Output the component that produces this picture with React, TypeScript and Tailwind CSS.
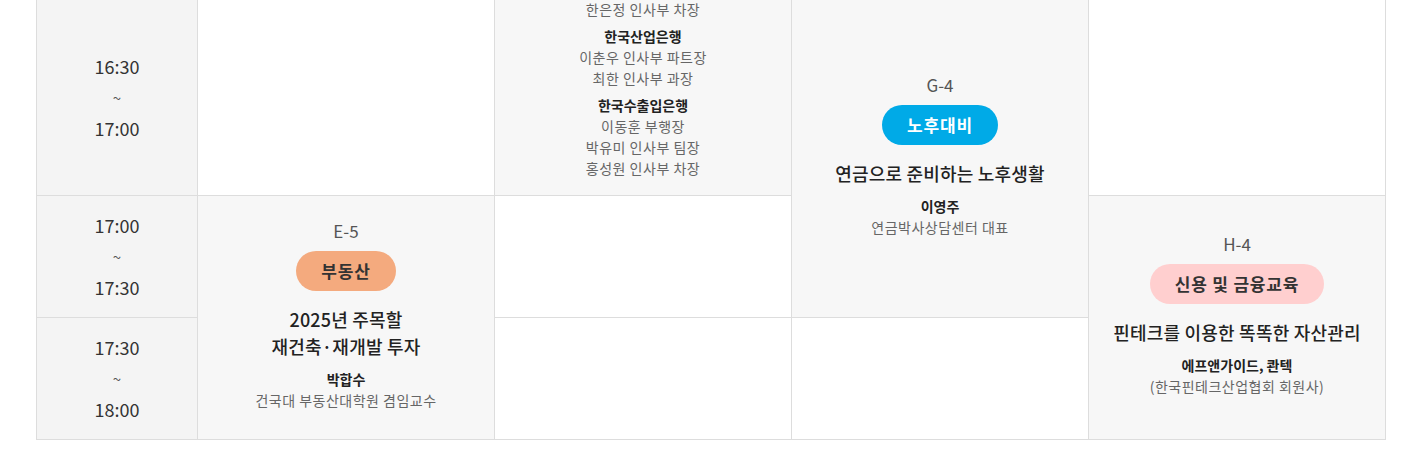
const font = { fontFamily: '"Noto Sans CJK KR", "Noto Sans", sans-serif' };

type Group = { org?: string; people: string[] };

const panel: Group[] = [
  { people: ["한은정 인사부 차장"] },
  { org: "한국산업은행", people: ["이춘우 인사부 파트장", "최한 인사부 과장"] },
  { org: "한국수출입은행", people: ["이동훈 부행장", "박유미 인사부 팀장", "홍성원 인사부 차장"] },
];

function TimeCell({ from, to, className }: { from: string; to: string; className: string }) {
  return (
    <div className={`bg-[#f4f4f4] flex flex-col items-center justify-center text-[18px] text-[#333] leading-[31px] ${className}`}>
      <span>{from}</span>
      <span className="text-[15px] text-[#555]">~</span>
      <span>{to}</span>
    </div>
  );
}

function Session({
  code,
  tag,
  tagClass,
  title,
  name,
  role,
  className,
}: {
  code: string;
  tag: string;
  tagClass: string;
  title: string[];
  name: string;
  role: string;
  className: string;
}) {
  return (
    <div className={`bg-[#f7f7f7] flex flex-col items-center justify-center text-center pb-[7px] ${className}`}>
      <div className="text-[17px] leading-[25px] text-[#555]">{code}</div>
      <div className={`mt-[8px] h-[40px] px-[25px] rounded-full flex items-center text-[17px] font-bold tracking-[0.8px] ${tagClass}`}>
        {tag}
      </div>
      <div className="mt-[15px] text-[18px] leading-[27px] font-medium tracking-[0.2px] text-[#222]">
        {title.map((t) => (
          <div key={t}>{t}</div>
        ))}
      </div>
      <div className="mt-[9px] text-[14px] leading-[21px] font-bold text-[#222]">{name}</div>
      <div className="text-[14px] leading-[21px] tracking-[0.5px] text-[#666]">{role}</div>
    </div>
  );
}

export default function App() {
  return (
    <div className="h-[453px] bg-white overflow-hidden" style={font}>
      <div className="ml-[36px] w-[1350px] bg-[#dddddd] px-px pb-px grid grid-cols-[160px_296px_296px_296px_296px] grid-rows-[195px_121px_121px] gap-px">
        <TimeCell from="16:30" to="17:00" className="col-start-1 row-start-1" />
        <div className="col-start-2 row-start-1 bg-white" />
        <div className="col-start-3 row-start-1 bg-[#f7f7f7] overflow-hidden flex flex-col justify-end items-center pb-[16px] text-center text-[14px] leading-[21px]">
          {panel.map((g, i) => (
            <div key={i} className={i > 0 ? "mt-[6px]" : ""}>
              {g.org && <div className="font-bold text-[#222]">{g.org}</div>}
              {g.people.map((p) => (
                <div key={p} className="text-[#666] tracking-[0.5px]">
                  {p}
                </div>
              ))}
            </div>
          ))}
        </div>
        <Session
          className="col-start-4 row-start-1 row-span-2"
          code="G-4"
          tag="노후대비"
          tagClass="bg-[#00aae7] text-white"
          title={["연금으로 준비하는 노후생활"]}
          name="이영주"
          role="연금박사상담센터 대표"
        />
        <div className="col-start-5 row-start-1 bg-white" />

        <TimeCell from="17:00" to="17:30" className="col-start-1 row-start-2" />
        <Session
          className="col-start-2 row-start-2 row-span-2"
          code="E-5"
          tag="부동산"
          tagClass="bg-[#f4aa7e] text-[#333]"
          title={["2025년 주목할", "재건축·재개발 투자"]}
          name="박합수"
          role="건국대 부동산대학원 겸임교수"
        />
        <div className="col-start-3 row-start-2 bg-white" />
        <Session
          className="col-start-5 row-start-2 row-span-2"
          code="H-4"
          tag="신용 및 금융교육"
          tagClass="bg-[#ffcfcf] text-[#333]"
          title={["핀테크를 이용한 똑똑한 자산관리"]}
          name="에프앤가이드, 콴텍"
          role="(한국핀테크산업협회 회원사)"
        />

        <TimeCell from="17:30" to="18:00" className="col-start-1 row-start-3" />
        <div className="col-start-3 row-start-3 bg-white" />
        <div className="col-start-4 row-start-3 bg-white" />
      </div>
    </div>
  );
}
